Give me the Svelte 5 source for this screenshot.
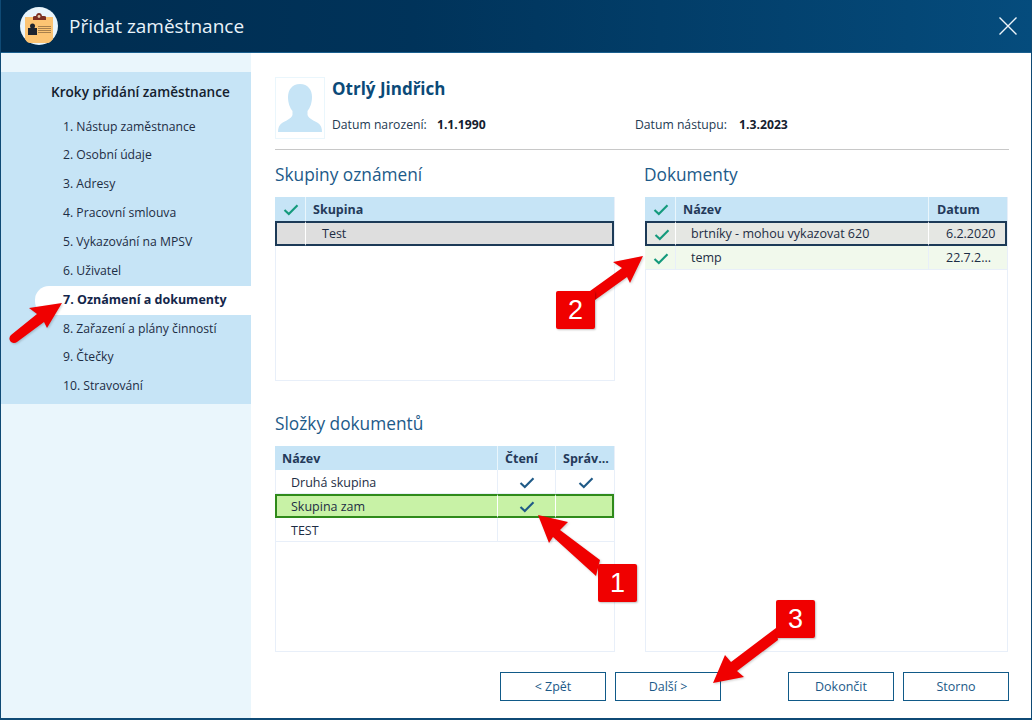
<script>
  const steps = [
    '1. Nástup zaměstnance', '2. Osobní údaje', '3. Adresy', '4. Pracovní smlouva',
    '5. Vykazování na MPSV', '6. Uživatel', '7. Oznámení a dokumenty',
    '8. Zařazení a plány činností', '9. Čtečky', '10. Stravování'
  ];
  const folders = [
    { name: 'Druhá skupina', read: true, admin: true },
    { name: 'Skupina zam', read: true, admin: false, sel: true },
    { name: 'TEST', read: false, admin: false }
  ];
  const docs = [
    { name: 'brtníky - mohou vykazovat 620', date: '6.2.2020', sel: true },
    { name: 'temp', date: '22.7.2...', soft: true }
  ];
</script>

{#snippet tick(cls)}
  <svg class="tick {cls}" viewBox="0 0 16 14" width="16" height="14" aria-hidden="true"><path d="M1.5 7 L5.8 11 L14.5 2.2" fill="none" stroke="currentColor" stroke-width="2.1"/></svg>
{/snippet}

{#snippet arrow(points)}
  <svg class="arrow" viewBox="0 0 1032 720" width="1032" height="720" aria-hidden="true">
    <path d={points} fill="#f00000" />
  </svg>
{/snippet}

<div class="window">
  <header class="top">
    <svg class="logo" viewBox="0 0 38 38" width="38" height="38" aria-hidden="true">
      <circle cx="19" cy="19" r="19" fill="#e9f5fc"/>
      <path d="M5 10 H33 V32 Q30 36 28 36 H10 Q7 36 5 32 Z" fill="#fcc473"/>
      <path d="M13 13 V10 Q13 9 15 9 H16 Q16.500 6 19 6 T22 9 H24 Q26 9 26 10 V13 Z" fill="#7b2f22"/>
      <circle cx="19" cy="9.500" r="1.400" fill="#e6c9a8"/>
      <circle cx="12.500" cy="19" r="2.500" fill="#1d2430"/>
      <rect x="8" y="21" width="9" height="7" fill="#1d2430"/>
      <path d="M18 19.500H31M18 21.500H31M18 23.500H31M18 25.500H31" stroke="#a8804c" stroke-width="1"/>
    </svg>
    <h1>Přidat zaměstnance</h1>
    <svg class="close" viewBox="0 0 18 18" width="18" height="18" aria-hidden="true"><path d="M0.5 0.5 L17.5 17.5 M17.5 0.5 L0.5 17.5" stroke="#eef5fa" stroke-width="1.4" fill="none"/></svg>
  </header>

  <div class="body">
    <aside class="side">
      <nav class="panel">
        <h2>Kroky přidání zaměstnance</h2>
        <ol>
          {#each steps as s, i}
            <li class:active={i === 6}>{s}</li>
          {/each}
        </ol>
      </nav>
    </aside>

    <main class="main">
      <section class="person">
        <div class="photo">
          <svg viewBox="0 0 44 48" width="44" height="48" aria-hidden="true">
            <path d="M22 0 C30 0 34 6 34 13 C34 19 32 24 29.500 27 V31 C31 35 37 37 40 39 C43 41 44 44 44 48 H0 C0 44 1 41 4 39 C7 37 13 35 14.500 31 V27 C12 24 10 19 10 13 C10 6 14 0 22 0 Z" fill="#c6e4f6"/>
          </svg>
        </div>
        <div class="info">
          <div class="name">Otrlý Jindřich</div>
          <div class="dates">
            <span class="date-a">Datum narození: <b>1.1.1990</b></span>
            <span class="date-b">Datum nástupu: <b>1.3.2023</b></span>
          </div>
        </div>
      </section>

      <div class="cols">
        <div class="col-left">
          <h3>Skupiny oznámení</h3>
          <div class="grid g1">
            <table>
              <colgroup><col style="width:31px"/><col/></colgroup>
              <thead><tr><th class="c">{@render tick('green')}</th><th>Skupina</th></tr></thead>
              <tbody><tr class="sel-gray"><td></td><td class="ind">Test</td></tr></tbody>
            </table>
          </div>
          <h3 class="second">Složky dokumentů</h3>
          <div class="grid g2">
            <table>
              <colgroup><col/><col style="width:58px"/><col style="width:58px"/></colgroup>
              <thead><tr><th>Název</th><th class="cn">Čtení</th><th class="cn">Správ...</th></tr></thead>
              <tbody>
                {#each folders as f}
                  <tr class:sel-green={f.sel}>
                    <td class="ind">{f.name}</td>
                    <td class="c">{#if f.read}{@render tick('blue')}{/if}</td>
                    <td class="c">{#if f.admin}{@render tick('blue')}{/if}</td>
                  </tr>
                {/each}
              </tbody>
            </table>
          </div>
        </div>
        <div class="col-right">
          <h3 class="docs">Dokumenty</h3>
          <div class="grid g3">
            <table>
              <colgroup><col style="width:31px"/><col/><col style="width:78px"/></colgroup>
              <thead><tr><th class="c">{@render tick('green')}</th><th>Název</th><th class="dt">Datum</th></tr></thead>
              <tbody>
                {#each docs as d}
                  <tr class:sel-dark={d.sel} class:soft={d.soft}>
                    <td class="c">{@render tick('green')}</td>
                    <td class="ind">{d.name}</td>
                    <td class="dv">{d.date}</td>
                  </tr>
                {/each}
              </tbody>
            </table>
          </div>
        </div>
      </div>

      <footer class="actions">
        <button>&lt; Zpět</button>
        <button>Další &gt;</button>
        <button class="gap">Dokončit</button>
        <button>Storno</button>
      </footer>
    </main>
  </div>

  {@render arrow('M62 303 L29 308 L37 314 L11 335 A4.500 4.500 0 0 0 17 342 L44 322 L47 328 Z')}
  {@render arrow('M538 515 L568 522 L560 530 L600 560 L596 576 L553 537 L549 543 Z')}
  {@render arrow('M643 256 L613 262 L622 268 L590 291 L595 300 L627 277 L630 283 Z')}
  {@render arrow('M713 683 L725 655 L731 662 L776 628 L778 640 L737 671 L744 677 Z')}

  <div class="badge b1">1</div>
  <div class="badge b2">2</div>
  <div class="badge b3">3</div>
</div>

<style>
  :global(body) { margin: 0; background: #fff; }
  .window {
    position: relative; width: 1032px; height: 720px; box-sizing: border-box;
    display: flex; flex-direction: column; overflow: hidden;
    font-family: "Open Sans", "Liberation Sans", sans-serif; color: #1d2d44;
    border-left: 1px solid #0f4a75; border-right: 1px solid #0f4a75; border-bottom: 2px solid #0f4a75;
  }
  .top {
    height: 53px; flex: none; display: flex; align-items: center; margin: 0 -1px;
    background: linear-gradient(90deg, #002c4f 0%, #00335a 40%, #054c7d 100%);
    padding-left: 20px; box-sizing: border-box; border-bottom: 1px solid #1a5f8e;
  }
  .logo { flex: none; }
  h1 { margin: 1px 0 0 11px; font-size: 19px; font-weight: 400; color: #e9f3fa; flex: 1; line-height: 1; }
  .close { margin-right: 15px; flex: none; }

  .body { flex: 1; display: flex; min-height: 0; }
  .side { width: 250px; flex: none; background: #eaf6fc; padding-top: 19px; box-sizing: border-box; }
  .panel { background: #c6e4f6; height: 332px; box-sizing: border-box; padding-top: 10px; }
  .panel h2 { margin: 0 0 11.6px 50px; font-size: 13.6px; font-weight: 600; color: #14202e; line-height: 19px; }
  ol { list-style: none; margin: 0; padding: 0; }
  li {
    height: 28.85px; line-height: 28.85px; font-size: 12.2px; padding-left: 62px; color: #1d2d44;
  }
  li.active {
    margin-left: 34px; padding-left: 28px; background: #fff; font-weight: 700; font-size: 12.5px; color: #14264a;
    border-radius: 14px 0 0 14px;
  }

  .main { flex: 1; padding: 24px 22px 17px 24px; display: flex; flex-direction: column; min-width: 0; }
  .person {
    display: flex; height: 72px; flex: none; border-bottom: 1px solid #c8c8c8; box-sizing: content-box;
  }
  .photo {
    width: 48px; height: 60px; border: 1px solid #eaf6fc; display: flex; align-items: flex-end; justify-content: center;
    box-sizing: content-box; overflow: hidden;
  }
  .photo svg { margin-bottom: 6px; }
  .info { margin-left: 7px; flex: 1; }
  .name { font-size: 17px; font-weight: 700; color: #0b4a78; line-height: 24px; }
  .dates { margin-top: 16px; font-size: 12.2px; line-height: 16px; display: flex; color: #243a52; }
  .date-a { width: 303px; }
  .dates b { margin-left: 7px; font-weight: 700; color: #14202e; }
  .date-b b { margin-left: 9px; }

  .cols { flex: 1; display: grid; grid-template-columns: 340px 363px; column-gap: 30px; min-height: 0; }
  .col-left, .col-right { display: flex; flex-direction: column; min-height: 0; }
  h3 { margin: 13px 0 10px; font-size: 17.3px; font-weight: 400; color: #1c5a89; line-height: 24px; }
  h3.docs { margin-left: -1px; }
  h3.second { margin: 31px 0 10px; }
  .grid { border: 1px solid #e8eff9; box-sizing: border-box; }
  .g1 { height: 184px; }
  .g2, .g3 { flex: 1; }

  table { width: calc(100% + 1px); margin: -1px 0 0 -1px; border-collapse: separate; border-spacing: 0; table-layout: fixed; }
  th {
    height: 24px; padding: 0 0 0 7px; background: #c6e4f6; font-size: 12.5px; font-weight: 700;
    text-align: left; color: #243a5a; border-right: 1px solid #eaf6fc; box-sizing: border-box;
  }
  th:last-child, td:last-child { border-right: none; }
  th.c { padding: 0 0 0 1px; text-align: center; }
  th.cn { padding-left: 7px; }
  th.dt { padding-left: 8px; }
  td {
    height: 24px; padding: 0; font-size: 12.5px; color: #1d2d44; border-right: 1px solid #e8eff9;
    border-bottom: 1px solid #e8eff9; box-sizing: border-box; white-space: nowrap; overflow: hidden;
  }
  td.ind { padding-left: 16px; }
  .g2 tr:not(.sel-green) td { padding-top: 1px; }
  .g3 td.ind { padding-left: 15px; }
  td.c { text-align: center; padding-left: 1px; }
  td.dv { padding-left: 17px; }
  .tick { display: inline-block; vertical-align: middle; }
  .tick.green { color: #149a7c; }
  .tick.blue { color: #1f5a87; }

  tr.sel-gray td { background: #dedede; border-top: 2px solid #1c3a57; border-bottom: 2px solid #1c3a57; border-right-color: #fff; height: 25px; }
  tr.sel-gray td:first-child { border-left: 2px solid #1c3a57; }
  tr.sel-gray td:last-child { border-right: 2px solid #1c3a57; }

  tr.sel-green td { background: #c8f2a6; border-top: 2px solid #2f8a1a; border-bottom: 2px solid #2f8a1a; border-right-color: #fff; }
  tr.sel-green td:first-child { border-left: 2px solid #2f8a1a; padding-left: 14px; }
  tr.sel-green td:last-child { border-right: 2px solid #2f8a1a; }

  tr.sel-dark td { background: #e5e7e3; border-top: 2px solid #1c3a57; border-bottom: 2px solid #1c3a57; border-right-color: #fff; height: 25px; }
  tr.sel-dark td:first-child { border-left: 2px solid #1c3a57; }
  tr.sel-dark td:last-child { border-right: 2px solid #1c3a57; }

  tr.soft td { background: #f1f9ec; }

  .actions { display: flex; justify-content: flex-end; gap: 9px; margin-top: 20px; flex: none; height: 29px; }
  .actions .gap { margin-left: 58px; }
  button {
    width: 106px; height: 29px; box-sizing: border-box; background: #fff; border: 1px solid #115a88;
    font-family: inherit; font-size: 12.5px; color: #1c5a89; padding: 0; border-radius: 0;
  }

  .arrow { position: absolute; left: -1px; top: 0; pointer-events: none; filter: drop-shadow(1px 1px 1px rgba(0,0,0,.2)); }
  .badge {
    position: absolute; width: 39px; height: 38px; background: #f00000; color: #fff; border-radius: 2px;
    font-family: "Liberation Sans", Arial, sans-serif; font-size: 27px; line-height: 38px; text-align: center;
    box-shadow: 1px 1px 2px rgba(0,0,0,.25);
  }
  .b1 { left: 597px; top: 564px; }
  .b2 { left: 555px; top: 291px; }
  .b3 { left: 775px; top: 600px; }
</style>
